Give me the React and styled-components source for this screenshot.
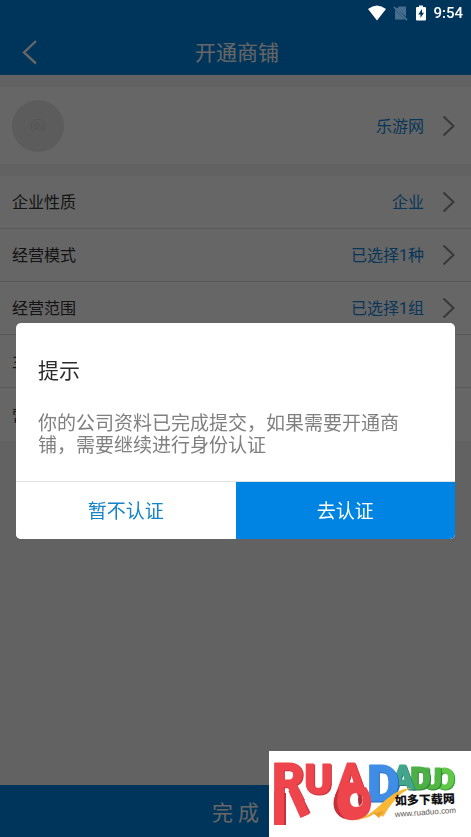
import { useState } from 'react';
import styled, { createGlobalStyle } from 'styled-components';

const GlobalStyle = createGlobalStyle`
  * {
    box-sizing: border-box;
  }
  body {
    margin: 0;
    background: #f5f5f5;
    font-family: Roboto, 'Noto Sans CJK SC', sans-serif;
  }
  button {
    margin: 0;
    border: 0;
    padding: 0;
    background: none;
    color: inherit;
    font: inherit;
    cursor: pointer;
  }
  svg {
    display: block;
    flex: none;
  }
`;

const StyledPage = styled.div`
  display: flex;
  flex-direction: column;
  min-height: 100vh;
`;

const StyledHeader = styled.header`
  display: grid;
  grid-template-columns: 60px 1fr 60px;
  align-items: center;
  padding-top: 28px;
  height: 75px;
  background: #0084e4;
  color: #fff;
  h1 {
    margin: 0;
    font-size: 21px;
    font-weight: 400;
    line-height: 28px;
    text-align: center;
    padding: 2px 0 0 3px;
  }
  button {
    justify-self: start;
    padding-left: 20px;
  }
`;

const StyledMain = styled.main`
  flex: 1;
  display: flex;
  flex-direction: column;
  gap: 12px;
  padding-top: 12px;
`;

const StyledGroup = styled.section`
  display: flex;
  flex-direction: column;
  background: #fff;
`;

const StyledRow = styled.button`
  display: flex;
  align-items: center;
  height: ${(p) => (p.$tall ? '77px' : '53px')};
  padding: 0 14px 0 12px;
  border-bottom: ${(p) => (p.$last ? '0' : '1px solid #dcdcdc')};
  font-size: 16px;
  line-height: 24px;
  text-align: left;
  .label,
  .value {
    padding-top: 2px;
  }
  .label {
    flex: 1;
    color: #333;
  }
  .value {
    margin-right: 17px;
    color: #1488dc;
  }
`;

const StyledAvatar = styled.span`
  display: flex;
  align-items: center;
  justify-content: center;
  width: 52px;
  height: 52px;
  margin-right: auto;
  border-radius: 50%;
  background: #e6e6e6;
`;

const StyledSubmit = styled.button`
  && {
    height: 52px;
    background: #0084e4;
    color: #fff;
    font-size: 21px;
  }
`;

const StyledStatus = styled.div`
  position: fixed;
  z-index: 3;
  top: 0;
  right: 0;
  display: flex;
  align-items: center;
  height: 26px;
  padding-right: 8px;
  gap: 7px;
  color: #fff;
  font-size: 15px;
  font-weight: 500;
`;

const StyledScrim = styled.div`
  position: fixed;
  z-index: 1;
  inset: 0;
  display: flex;
  align-items: center;
  padding: 25px 16px 0;
  background: rgba(0, 0, 0, 0.6);
`;

const StyledDialog = styled.div`
  flex: 1;
  overflow: hidden;
  border-radius: 5px;
  background: #fff;
  h2 {
    margin: 0;
    padding: 33px 22px 27px;
    color: #2b2b2b;
    font-size: 21px;
    font-weight: 400;
    line-height: 30px;
  }
  p {
    margin: 0;
    padding: 0 22px 24px;
    color: #808080;
    font-size: 19px;
    line-height: 22px;
  }
`;

const StyledActions = styled.div`
  display: grid;
  grid-template-columns: 1fr 1fr;
  border-top: 1px solid #e2e2e2;
`;

const StyledAction = styled.button`
  && {
    height: 57px;
    padding-bottom: 2px;
    background: ${(p) => (p.$primary ? '#0084e4' : '#fff')};
    color: ${(p) => (p.$primary ? '#fff' : '#1484ca')};
    font-size: 19px;
  }
`;

const StyledBadge = styled.div`
  position: fixed;
  z-index: 2;
  right: 0;
  bottom: 0;
  background: #fff;
`;

const StyledLetter = styled.text`
  font-family: Roboto, sans-serif;
  font-weight: 900;
  stroke-width: 1px;
  stroke-linejoin: round;
  filter: drop-shadow(1px 1px 0 ${(p) => p.$side});
`;

const rows = [
  { label: '企业性质', value: '企业' },
  { label: '经营模式', value: '已选择1种' },
  { label: '经营范围', value: '已选择1组' },
  { label: '主营产品', value: '' },
  { label: '营业执照', value: '' },
];

const Chevron = () => (
  <svg width="16" height="24" viewBox="0 0 16 24" fill="none" aria-hidden="true">
    <path d="M2.5 2.5 L12.5 12 L2.5 21.5" stroke="#8c8c8c" strokeWidth="2" />
  </svg>
);

const BackIcon = () => (
  <svg width="20" height="26" viewBox="0 0 20 26" fill="none" aria-hidden="true">
    <path d="M16 2 L4 13.5 L16 24.5" stroke="#fff" strokeWidth="2.4" />
  </svg>
);

const AvatarIcon = () => (
  <svg width="18" height="18" viewBox="0 0 18 18" fill="none" stroke="#d2d2d2" aria-hidden="true">
    <path d="M5 15 A7 7 0 1 1 15 13" />
    <path d="M5 9 L8 5 L9 11 L6 12 Z M9 9 H13 V13 H8" />
  </svg>
);

const StatusBar = () => (
  <StyledStatus>
    <svg width="18" height="16" viewBox="0 0 18 16" aria-hidden="true">
      <path d="M0 4 Q9 -3.2 18 4 L9 15.5 Z" fill="#fff" />
    </svg>
    <svg width="15" height="16" viewBox="0 0 15 16" aria-hidden="true">
      <path d="M6 1.5 H13 V11.8 L3.5 3.8 Z M2 4.6 L12 14.5 H2 Z" fill="#466d8d" />
      <path d="M1 2 L14 15" stroke="#577b98" strokeWidth="1.4" />
    </svg>
    <svg width="11" height="16" viewBox="2 0 11 16" aria-hidden="true">
      <path d="M6 0.5 H10 V2 H12 Q13 2 13 3 V14.5 Q13 15.5 12 15.5 H4 Q3 15.5 3 14.5 V3 Q3 2 4 2 H6 Z" fill="#fff" />
      <path d="M9 4 L5.2 9.4 H7.5 V13 L11 7.8 H9 Z" fill="#00355b" />
    </svg>
    <span>9:54</span>
  </StyledStatus>
);

// painted back to front, so the left letter covers the one on its right
const letters = [
  { ch: 'O', x: 165, y: 38, size: 30, face: '#62c84a', side: '#3b9c36' },
  { ch: 'U', x: 153, y: 38, size: 30, face: '#52b745', side: '#318a34' },
  { ch: 'D', x: 141, y: 38, size: 32, face: '#4cb047', side: '#2f8436' },
  { ch: 'A', x: 122, y: 38, size: 34, face: '#43a68a', side: '#2c7c80' },
  { ch: 'D', x: 98, y: 50, size: 50, face: '#3f8de4', side: '#2869b8' },
  { ch: 'A', x: 67, y: 44, size: 44, face: '#ee454c', side: '#c5313b' },
  { ch: 'U', x: 35, y: 43, size: 43, face: '#ee454c', side: '#c5313b' },
  { ch: 'R', x: 3, y: 48, size: 50, face: '#ee454c', side: '#c5313b' },
];

const Logo = () => (
  <svg width="202" height="86" viewBox="0 0 202 86">
    <g stroke="#c5313b" fill="none">
      <path d="M12 42 V74" strokeWidth="10" />
      <path d="M26 42 L37 64" strokeWidth="10" />
    </g>
    {letters.map((v) => (
      <StyledLetter key={v.x} x={v.x} y={v.y} fontSize={v.size} fill={v.face} stroke={v.face} $side={v.side}>
        {v.ch}
      </StyledLetter>
    ))}
    <g stroke="#ee454c" fill="none">
      <path d="M10 40 V74" strokeWidth="10" />
      <path d="M24 38 L36 65" strokeWidth="10" />
    </g>
    <path
      d="M71 36 C64 46 63 62 76 68 C88 72 101 67 102 54 C103 46 100 41 97 36 L91 38 H76 Z M87 42 C92 42 94 45 94 49 C94 53 92 56 87 56 C83 56 81 53 81 49 C81 45 83 42 87 42 Z"
      fill="#ee454c"
      fillRule="evenodd"
    />
    <path d="M70 37 C62 48 62 63 76 68 Q68 60 68 50 Z" fill="#c5313b" />
    <path d="M90 43 C95 45 95 53 90 55 Q88 49 90 43 Z" fill="#b82e38" />
    <path d="M83 69 C108 68 116 38 143 37 C130 41 122 53 114 66 L108 61 Q98 69 83 69 Z" fill="#f8b735" />
    <path d="M104 62 L110 67 L115 60 Z" fill="#eaa22c" />
    <text
      x="126"
      y="54"
      fontFamily="'Noto Sans CJK SC', sans-serif"
      fontSize="12"
      fontWeight="900"
      fill="#111"
      transform="rotate(-2 126 54)"
    >
      如多下载网
    </text>
    <text
      x="126"
      y="66"
      fontFamily="'Liberation Sans', sans-serif"
      fontSize="8"
      fill="#5d5550"
      transform="rotate(-4 126 66)"
    >
      www.ruaduo.com
    </text>
  </svg>
);

const App = () => {
  const [open, setOpen] = useState(true);
  const close = () => setOpen(false);
  return (
    <>
      <GlobalStyle />
      <StatusBar />
      <StyledPage>
        <StyledHeader>
          <button type="button" aria-label="返回">
            <BackIcon />
          </button>
          <h1>开通商铺</h1>
        </StyledHeader>
        <StyledMain>
          <StyledGroup>
            <StyledRow type="button" $tall $last>
              <StyledAvatar>
                <AvatarIcon />
              </StyledAvatar>
              <span className="value">乐游网</span>
              <Chevron />
            </StyledRow>
          </StyledGroup>
          <StyledGroup>
            {rows.map((v, i) => (
              <StyledRow type="button" key={v.label} $last={i === rows.length - 1}>
                <span className="label">{v.label}</span>
                <span className="value">{v.value}</span>
                <Chevron />
              </StyledRow>
            ))}
          </StyledGroup>
        </StyledMain>
        <StyledSubmit type="button">完 成</StyledSubmit>
      </StyledPage>
      {open && (
        <StyledScrim>
          <StyledDialog role="dialog" aria-modal="true" aria-labelledby="tip-title">
            <h2 id="tip-title">提示</h2>
            <p>你的公司资料已完成提交，如果需要开通商铺，需要继续进行身份认证</p>
            <StyledActions>
              <StyledAction type="button" onClick={close}>
                暂不认证
              </StyledAction>
              <StyledAction type="button" $primary onClick={close}>
                去认证
              </StyledAction>
            </StyledActions>
          </StyledDialog>
        </StyledScrim>
      )}
      <StyledBadge>
        <Logo />
      </StyledBadge>
    </>
  );
};

export default App;
